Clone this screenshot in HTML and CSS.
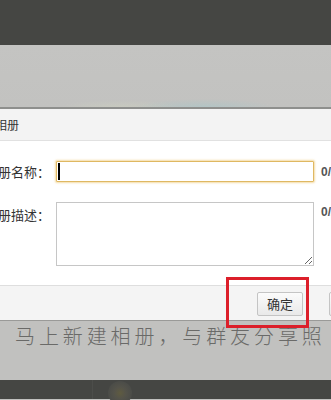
FILE: index.html
```html
<!DOCTYPE html>
<html lang="zh-CN">
<head>
<meta charset="utf-8">
<title>新建相册</title>
<link rel="stylesheet" href="styles.css">
</head>
<body>
<div class="page">
  <div class="topbar"></div>
  <div class="mask-top"></div>
  <div class="dialog">
    <div class="dlg-title">相册</div>
    <div class="dlg-body">
      <div class="row">
        <label class="lbl" for="name">相册名称：</label>
        <div class="field"><input id="name" class="txt" type="text"></div>
        <span class="count">0/30</span>
      </div>
      <div class="row row-top">
        <label class="lbl lbl-top" for="desc">相册描述：</label>
        <textarea id="desc" class="area"></textarea>
        <span class="count">0/200</span>
      </div>
    </div>
    <div class="dlg-foot">
      <button class="btn" type="button">确定</button>
      <button class="btn" type="button">取消</button>
    </div>
  </div>
  <div class="band">
    <p class="hand">马上新建相册，与群友分享照</p>
  </div>
  <div class="bottombar">
    <span class="sep"></span>
    <span class="logo"></span>
  </div>
  <div class="mark"></div>
</div>
</body>
</html>
```
FILE: styles.css
```css
html, body {
  margin: 0;
  padding: 0;
}
body {
  width: 331px;
  height: 400px;
  overflow: hidden;
  background: #c1c1bf;
  font-family: "Noto Sans CJK SC", "Liberation Sans", sans-serif;
}
.page {
  position: relative;
  width: 331px;
  height: 400px;
  overflow: hidden;
}
.topbar {
  height: 45px;
  background: #454643;
}
.mask-top {
  height: 62px;
  background:
    radial-gradient(ellipse 70px 8px at 205px 100%, rgba(150, 200, 205, 0.35), rgba(150, 200, 205, 0) 100%),
    radial-gradient(ellipse 60px 7px at 120px 100%, rgba(210, 215, 190, 0.35), rgba(210, 215, 190, 0) 100%),
    linear-gradient(#c4c4c2, #c2c2c0);
}
.dialog {
  width: 440px;
  margin-left: -20px;
  border-top: 2px solid #8e8f8d;
  border-bottom: 1px solid #9a9a98;
  background: #fff;
}
.dlg-title {
  height: 31px;
  line-height: 31px;
  padding-left: 15px;
  font-size: 12px;
  color: #333;
  background: #f3f3f3;
  border-bottom: 1px solid #e1e1e1;
}
.dlg-body {
  padding: 20px 0 19px;
  display: flex;
  flex-direction: column;
  gap: 20px;
}
.row {
  display: flex;
  align-items: center;
}
.row-top {
  align-items: flex-start;
}
.lbl {
  width: 70px;
  flex: none;
  text-align: right;
  font-size: 13px;
  line-height: 21px;
  color: #333;
  margin-right: 6px;
}
.lbl-top {
  margin-top: 2px;
}
.field {
  position: relative;
  width: 258px;
  height: 21px;
  flex: none;
}
.field::after {
  content: "";
  position: absolute;
  left: 2px;
  top: 2px;
  width: 2px;
  height: 17px;
  background: #000;
}
.txt {
  display: block;
  box-sizing: border-box;
  width: 258px;
  height: 21px;
  margin: 0;
  padding: 0 4px;
  border: 1px solid #dfb862;
  border-radius: 1px;
  box-shadow: 0 0 2px 1px rgba(240, 205, 130, 0.7);
  outline: none;
  background: #fff;
  font-size: 12px;
}
.area {
  display: block;
  box-sizing: border-box;
  width: 258px;
  height: 64px;
  margin: 0;
  padding: 2px 4px;
  border: 1px solid #c6c6c6;
  outline: none;
  background: #fff;
  flex: none;
  font-size: 12px;
}
.count {
  margin-left: 7px;
  font-family: "Liberation Sans", Arial, sans-serif;
  font-size: 12px;
  font-weight: bold;
  line-height: 20px;
  color: #555;
  white-space: nowrap;
}
.dlg-foot {
  box-sizing: border-box;
  height: 35px;
  border-top: 1px solid #dedede;
  background: #f4f4f4;
  display: flex;
  align-items: flex-start;
  padding-top: 6px;
  padding-left: 277px;
  gap: 26px;
}
.btn {
  box-sizing: border-box;
  width: 46px;
  height: 24px;
  flex: none;
  margin: 0;
  padding: 0;
  border: 1px solid #c4c4c4;
  border-radius: 2px;
  background: linear-gradient(#fbfbfb, #e9e9e9);
  font-family: "Noto Sans CJK SC", sans-serif;
  font-size: 13px;
  line-height: 22px;
  color: #333;
}
.band {
  height: 59px;
  background: #c1c1bf;
}
.hand {
  margin: 0;
  padding: 3px 0 0 15px;
  font-size: 20px;
  line-height: 24px;
  letter-spacing: 3.9px;
  color: #6a6a68;
  white-space: nowrap;
  font-weight: 300;
}
.bottombar {
  height: 19px;
  background: #454643;
  display: flex;
  align-items: flex-start;
  padding-left: 92px;
}
.sep {
  width: 1px;
  height: 19px;
  background: #4c4d4a;
}
.logo {
  width: 24px;
  height: 24px;
  margin-left: 15px;
  margin-top: 1px;
  border-radius: 50%;
  background: radial-gradient(circle at 50% 50%, #5f5b40 0, #54534a 35%, #4b4c48 70%, #474845 100%);
}
.mark {
  position: absolute;
  left: 226px;
  top: 277px;
  width: 83px;
  height: 51px;
  box-sizing: border-box;
  border: 3px solid #dc1f2a;
}
```
